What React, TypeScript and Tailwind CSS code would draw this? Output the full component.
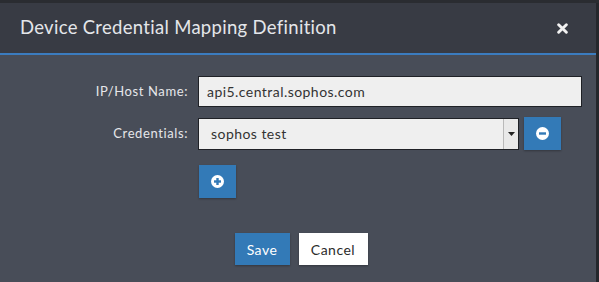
import React from 'react';

export default function App() {
  return (
    <div className="w-[599px] h-[282px] overflow-hidden bg-[#25272c] font-['Lato',sans-serif]">
      <div className="h-[3px] bg-[#2a2c31]" />
      <div className="w-[596px] h-[279px] flex flex-col bg-[#484d58]">
        {/* Header */}
        <div className="h-[52px] shrink-0 flex items-center justify-between pl-[20px] pr-[28px] bg-[#383b44] border-b-2 border-[#3b7cbf]">
          <h1 className="text-[18.5px] text-[#e4e6ea] tracking-[0.3px]">Device Credential Mapping Definition</h1>
          <svg width="11" height="11" viewBox="0 0 10 10" className="mt-[1px]">
            <path d="M1.5 1.5 L8.5 8.5 M8.5 1.5 L1.5 8.5" stroke="#f2f2f2" strokeWidth="2.6" strokeLinecap="round" />
          </svg>
        </div>

        {/* Body */}
        <div className="flex flex-col pt-[21px]">
          <div className="flex items-center h-[31px]">
            <label className="w-[188px] text-right text-[13px] tracking-[0.6px] text-[#e6e7ea]">IP/Host Name:</label>
            <div className="ml-[10px] w-[384px] h-[31px] bg-[#efefef] border border-[#1f2126] flex items-center pl-[8px] text-[14px] tracking-[0.45px] text-[#333]">
              api5.central.sophos.com
            </div>
          </div>

          <div className="flex items-center h-[33px] mt-[10px]">
            <label className="w-[188px] text-right text-[13px] tracking-[0.6px] text-[#e6e7ea]">Credentials:</label>
            <div className="ml-[10px] w-[321px] h-[32px] bg-[#efefef] border border-[#1f2126] flex items-center text-[14px] tracking-[0.45px] text-[#333]">
              <span className="flex-1 pl-[12px]">sophos test</span>
              <div className="w-[15px] h-full border-l border-[#b9b9b9] bg-[#e9e9e9] flex items-center justify-center">
                <svg width="7" height="4" viewBox="0 0 7 4"><path d="M0 0 H7 L3.5 4 Z" fill="#222" /></svg>
              </div>
            </div>
            <button className="ml-[5px] w-[37px] h-[33px] bg-[#337ab7] flex items-center justify-center shadow-[0_1px_2px_rgba(0,0,0,0.3)]">
              <svg width="13" height="13" viewBox="0 0 13 13">
                <circle cx="6.5" cy="6.5" r="6.5" fill="#fff" />
                <rect x="3" y="5.3" width="7" height="2.4" fill="#337ab7" />
              </svg>
            </button>
          </div>

          <div className="flex mt-[15px] pl-[199px]">
            <button className="w-[37px] h-[33px] bg-[#337ab7] flex items-center justify-center shadow-[0_1px_2px_rgba(0,0,0,0.3)]">
              <svg width="13" height="13" viewBox="0 0 13 13">
                <circle cx="6.5" cy="6.5" r="6.5" fill="#fff" />
                <rect x="3" y="5.3" width="7" height="2.4" fill="#337ab7" />
                <rect x="5.3" y="3" width="2.4" height="7" fill="#337ab7" />
              </svg>
            </button>
          </div>

          <div className="flex justify-center gap-[9px] mt-[35px] pl-[6px]">
            <button className="w-[55px] h-[32px] bg-[#337ab7] text-white text-[14px] tracking-[0.5px] shadow-[0_1px_2px_rgba(0,0,0,0.3)]">Save</button>
            <button className="w-[69px] h-[32px] bg-white text-[#2b2b2b] text-[14px] tracking-[0.5px] shadow-[0_1px_2px_rgba(0,0,0,0.3)]">Cancel</button>
          </div>
        </div>
      </div>
    </div>
  );
}
